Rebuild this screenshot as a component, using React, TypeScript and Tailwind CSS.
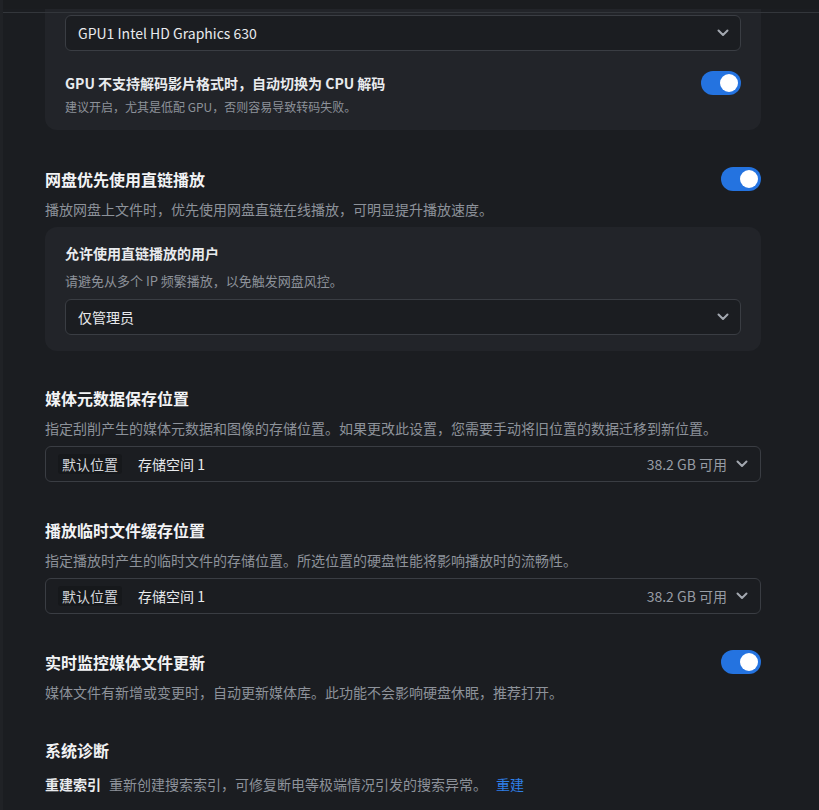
import React from "react";

const Chevron = () => (
  <svg width="12" height="8" viewBox="0 0 12 8" fill="none" stroke="#a3a8b0" strokeWidth="2" strokeLinecap="round" strokeLinejoin="round">
    <path d="M1.5 1.5L6 6l4.5-4.5" />
  </svg>
);

const Toggle = () => (
  <div className="w-[40px] h-[24px] rounded-full bg-[#2473e0] flex items-center justify-end pr-[3px] shrink-0">
    <div className="w-[18px] h-[18px] rounded-full bg-white" />
  </div>
);

const Dropdown = ({ text }: { text: string }) => (
  <div className="h-[36px] rounded-[6px] border border-[#3a3d43] bg-[#1b1d21] flex items-center justify-between pl-[12px] pr-[11px]">
    <span className="text-[14px] text-[#e8eaed]">{text}</span>
    <Chevron />
  </div>
);

const StorageSelect = () => (
  <div className="h-[36px] rounded-[6px] border border-[#3a3d43] bg-[#1b1d21] flex items-center justify-between pl-[12px] pr-[12px]">
    <div className="flex items-center gap-[16px]">
      <span className="px-[4px] h-[20px] leading-[20px] rounded-[3px] bg-[#16181b] text-[14px] text-[#d2d5da]">默认位置</span>
      <span className="text-[14px] text-[#e8eaed]">存储空间 1</span>
    </div>
    <div className="flex items-center gap-[9px]">
      <span className="text-[14px] text-[#979ca4]">38.2 GB 可用</span>
      <Chevron />
    </div>
  </div>
);

const Heading = ({ title, toggle }: { title: string; toggle?: boolean }) => (
  <div className="h-[24px] flex items-center justify-between">
    <span className="text-[16px] font-bold text-[#f2f3f5]">{title}</span>
    {toggle && <Toggle />}
  </div>
);

const Desc = ({ children }: { children: React.ReactNode }) => (
  <div className="mt-[8px] h-[20px] leading-[20px] text-[14px] text-[#8d929a]">{children}</div>
);

export default function App() {
  return (
    <div
      className="relative w-[819px] h-[810px] overflow-hidden bg-[#1b1d21] flex"
      style={{ fontFamily: '"Noto Sans CJK SC", "Noto Sans", sans-serif' }}
    >
      <div className="w-[3px] shrink-0 bg-[#202226]" />
      <div className="flex-1 flex flex-col">
        <div className="h-[9px] shrink-0 bg-[#1a1c1f]" />
        <div className="pl-[42px] w-[758px] flex flex-col">
          {/* GPU card (scrolled) */}
          <div className="rounded-b-[12px] bg-[#222429] px-[20px] pt-[6px] pb-[14px]">
            <Dropdown text="GPU1 Intel HD Graphics 630" />
            <div className="mt-[20px] h-[24px] flex items-center justify-between">
              <span className="text-[14px] font-bold text-[#e9ebee]">GPU 不支持解码影片格式时，自动切换为 CPU 解码</span>
              <Toggle />
            </div>
            <div className="mt-[3px] h-[18px] leading-[18px] text-[12px] text-[#8d929a]">建议开启，尤其是低配 GPU，否则容易导致转码失败。</div>
          </div>

          {/* 网盘直链 */}
          <div className="mt-[37px]">
            <Heading title="网盘优先使用直链播放" toggle />
            <Desc>播放网盘上文件时，优先使用网盘直链在线播放，可明显提升播放速度。</Desc>
            <div className="mt-[8px] rounded-[12px] bg-[#222429] px-[20px] pt-[16px] pb-[16px]">
              <div className="h-[20px] leading-[20px] text-[14px] font-bold text-[#e9ebee]">允许使用直链播放的用户</div>
              <div className="mt-[8px] h-[20px] leading-[20px] text-[13px] text-[#8d929a]">请避免从多个 IP 频繁播放，以免触发网盘风控。</div>
              <div className="mt-[8px]">
                <Dropdown text="仅管理员" />
              </div>
            </div>
          </div>

          {/* 媒体元数据 */}
          <div className="mt-[35px]">
            <Heading title="媒体元数据保存位置" />
            <Desc>指定刮削产生的媒体元数据和图像的存储位置。如果更改此设置，您需要手动将旧位置的数据迁移到新位置。</Desc>
            <div className="mt-[8px]">
              <StorageSelect />
            </div>
          </div>

          {/* 播放临时文件 */}
          <div className="mt-[36px]">
            <Heading title="播放临时文件缓存位置" />
            <Desc>指定播放时产生的临时文件的存储位置。所选位置的硬盘性能将影响播放时的流畅性。</Desc>
            <div className="mt-[8px]">
              <StorageSelect />
            </div>
          </div>

          {/* 实时监控 */}
          <div className="mt-[36px]">
            <Heading title="实时监控媒体文件更新" toggle />
            <Desc>媒体文件有新增或变更时，自动更新媒体库。此功能不会影响硬盘休眠，推荐打开。</Desc>
          </div>

          {/* 系统诊断 */}
          <div className="mt-[36px]">
            <Heading title="系统诊断" />
            <div className="mt-[12px] h-[20px] flex items-center text-[14px]">
              <span className="font-bold text-[#e9ebee]">重建索引</span>
              <span className="ml-[8px] text-[#8d929a]">重新创建搜索索引，可修复断电等极端情况引发的搜索异常。</span>
              <span className="ml-[9px] text-[#2f7fe6]">重建</span>
            </div>
          </div>
        </div>
      </div>
      <div className="absolute left-[3px] right-0 top-[12px] h-px bg-[#33363b]" />
    </div>
  );
}
